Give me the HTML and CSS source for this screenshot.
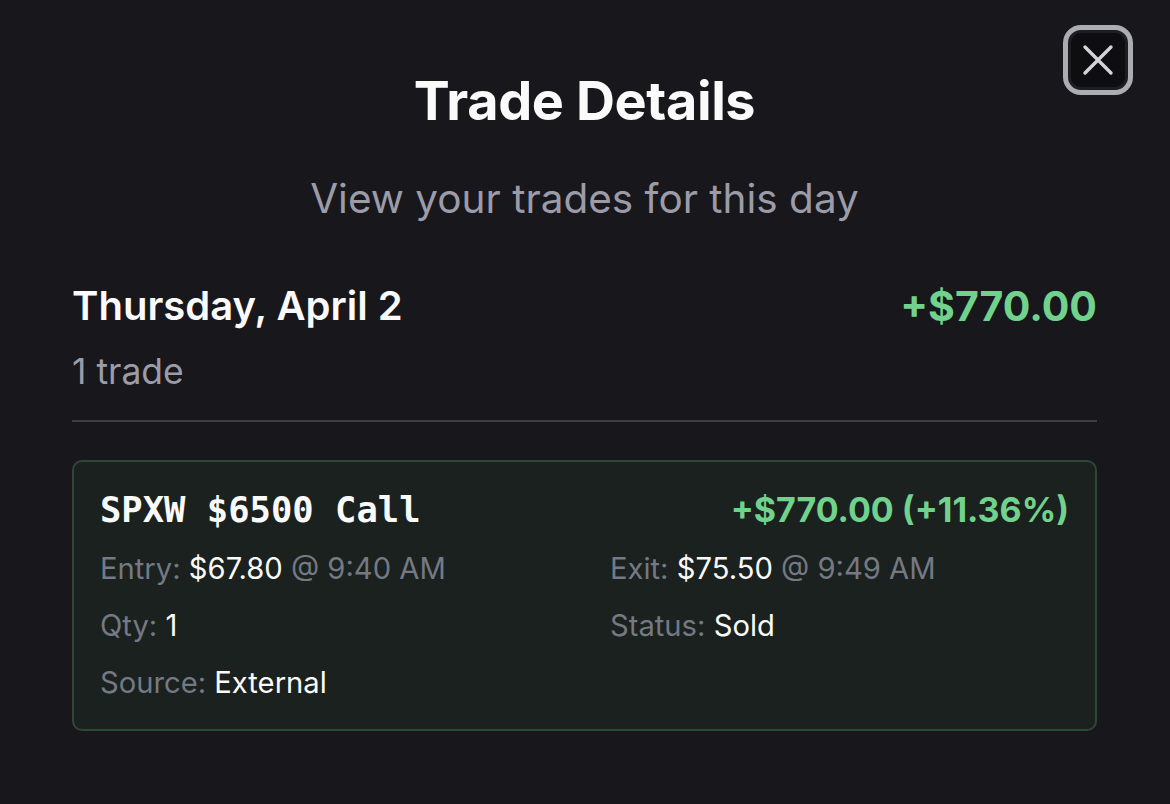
FILE: index.html
```html
<!DOCTYPE html>
<html>
<head>
<meta charset="utf-8">
<link rel="stylesheet" href="styles.css">
</head>
<body>
<div class="modal">
  <button class="close" aria-label="Close">
    <svg width="34" height="34" viewBox="0 0 34 34"><path d="M4 4 L30 30 M30 4 L4 30" stroke="#d4d4d8" stroke-width="3.4" stroke-linecap="round"/></svg>
  </button>
  <header class="head">
    <h1 class="title">Trade Details</h1>
    <p class="subtitle">View your trades for this day</p>
  </header>
  <section class="day">
    <div class="day-row">
      <h2 class="day-name">Thursday, April 2</h2>
      <span class="day-pnl">+$770.00</span>
    </div>
    <div class="day-count">1 trade</div>
  </section>
  <div class="divider"></div>
  <article class="card">
    <div class="card-top">
      <span class="symbol">SPXW $6500 Call</span>
      <span class="pnl">+$770.00 (+11.36%)</span>
    </div>
    <div class="grid">
      <div class="item"><span class="lbl">Entry:</span> <span class="val">$67.80</span> <span class="lbl">@ 9:40 AM</span></div>
      <div class="item"><span class="lbl">Exit:</span> <span class="val">$75.50</span> <span class="lbl">@ 9:49 AM</span></div>
      <div class="item"><span class="lbl">Qty:</span> <span class="val">1</span></div>
      <div class="item"><span class="lbl">Status:</span> <span class="val">Sold</span></div>
      <div class="item"><span class="lbl">Source:</span> <span class="val">External</span></div>
    </div>
  </article>
</div>
</body>
</html>
```
FILE: styles.css
```css
html, body {
  margin: 0;
  padding: 0;
  background: #18171c;
  height: 100%;
}
body {
  font-family: Inter, "Noto Sans", sans-serif;
  color: #fafafa;
}
.modal {
  position: relative;
  width: 1170px;
  height: 804px;
  box-sizing: border-box;
  padding: 70px 73px 0 72px;
}
.close {
  position: absolute;
  top: 25px;
  right: 37px;
  width: 70px;
  height: 70px;
  box-sizing: border-box;
  border: 5px solid #acadb4;
  border-radius: 18px;
  background: #0e0e11;
  box-shadow: inset 0 0 0 3px #1d1d22;
  display: flex;
  align-items: center;
  justify-content: center;
  padding: 0;
}
.head {
  text-align: center;
}
.title {
  margin: 0;
  font-size: 54px;
  font-weight: 700;
  line-height: 62px;
  letter-spacing: -0.4px;
}
.subtitle {
  margin: 44px 0 0;
  font-size: 40.5px;
  font-weight: 400;
  line-height: 46px;
  color: #9b9ca7;
}
.day {
  margin-top: 59px;
}
.day-row {
  display: flex;
  justify-content: space-between;
  align-items: center;
}
.day-name {
  margin: 0;
  font-size: 40px;
  font-weight: 600;
  line-height: 50px;
}
.day-pnl {
  font-size: 41px;
  font-weight: 700;
  line-height: 50px;
  color: #71d28d;
}
.day-count {
  margin-top: 21px;
  font-size: 35.5px;
  color: #9b9ca7;
  line-height: 40px;
}
.divider {
  margin-top: 28px;
  height: 2px;
  background: #3d3d43;
}
.card {
  margin-top: 38px;
  background: #1a211e;
  border: 2px solid #2f4735;
  border-radius: 10px;
  padding: 26px 26px 26px 26px;
  height: 271px;
  box-sizing: border-box;
}
.card-top {
  display: flex;
  justify-content: space-between;
  align-items: center;
}
.symbol {
  font-family: "DejaVu Sans Mono", monospace;
  font-weight: 700;
  font-size: 35.5px;
  line-height: 44px;
}
.pnl {
  font-size: 34px;
  font-weight: 700;
  line-height: 44px;
  color: #71d28d;
}
.grid {
  margin-top: 17px;
  display: grid;
  grid-template-columns: 510px 1fr;
  row-gap: 17px;
}
.item {
  font-size: 29.2px;
  line-height: 40px;
}
.lbl {
  color: #757983;
}
.val {
  color: #fafafa;
}
```
